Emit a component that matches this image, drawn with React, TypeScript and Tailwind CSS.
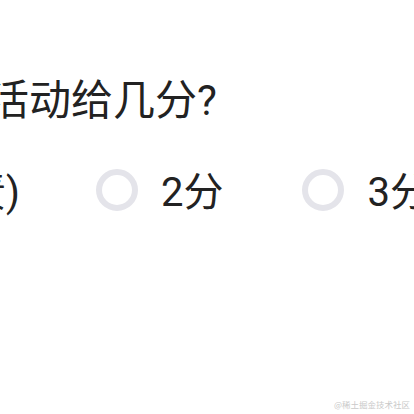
import React from "react";

const font = { fontFamily: 'Roboto, "Noto Sans CJK SC", "Noto Sans", sans-serif' };

function Radio() {
  return <span className="block h-[42px] w-[42px] shrink-0 rounded-full border-[6px] border-[#e4e4ea] bg-white" />;
}

export default function App() {
  return (
    <div
      className="relative h-[414px] w-[414px] overflow-hidden bg-white text-[#222222]"
      style={font}
    >
      <div className="pt-[80px]">
        <h2 className="-ml-[13px] whitespace-nowrap text-[42px] font-normal leading-none">
          活动给几分?
        </h2>
      </div>

      <div className="mt-[45px] -ml-[34px] flex items-center gap-[79px] whitespace-nowrap">
        <span className="-mr-[3px] pt-[6px] text-[40px] leading-none">责)</span>
        <label className="flex items-center gap-[23px]">
          <Radio />
          <span className="pt-[6px] text-[40px] leading-none">2分</span>
        </label>
        <label className="flex items-center gap-[23px]">
          <Radio />
          <span className="pt-[6px] text-[40px] leading-none">3分</span>
        </label>
      </div>

      <span
        className="absolute bottom-[3px] right-[4px] text-[8.5px] text-[#c9c9c9]"
        style={{ fontFamily: '"Noto Sans CJK SC", sans-serif' }}
      >
        @稀土掘金技术社区
      </span>
    </div>
  );
}
